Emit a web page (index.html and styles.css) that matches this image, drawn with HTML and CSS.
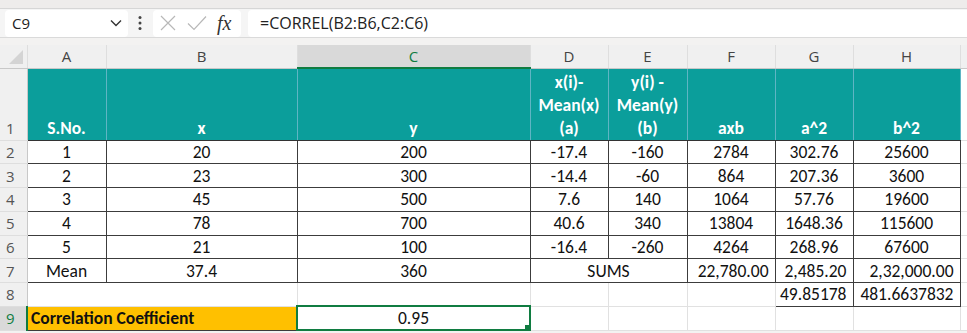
FILE: index.html
```html
<!DOCTYPE html>
<html>
	<head>
		<meta http-equiv="content-type" content="text/html; charset=utf-8" />
		<link rel="stylesheet" href="styles.css">
	</head>
	<body>
		<div class="top-edge"></div>
		<div class="formula-bar">
			<div class="name-box">
				<span>C9</span>
				<svg class="chevron" viewBox="0 0 12 8" width="12" height="8"><path d="M1 1.5 L6 6.5 L11 1.5" fill="none" stroke="#333" stroke-width="1.4" /></svg>
			</div>
			<svg class="dots" viewBox="0 0 4 16" width="4" height="16"><circle cx="2" cy="2.5" r="1.5" fill="#444" /><circle cx="2" cy="8" r="1.5" fill="#444" /><circle cx="2" cy="13.5" r="1.5" fill="#444" /></svg>
			<div class="fx-box">
				<svg viewBox="0 0 16 16" width="16" height="16"><path d="M1 1 L15 15 M15 1 L1 15" stroke="#b8b8b8" stroke-width="1.2" /></svg>
				<svg viewBox="0 0 20 16" width="20" height="16"><path d="M1 8.5 L7 14.5 L19 1.5" fill="none" stroke="#b8b8b8" stroke-width="1.2" /></svg>
				<span class="fx">fx</span>
			</div>
			<div class="formula-input">=CORREL(B2:B6,C2:C6)</div>
		</div>
		<div class="gap"></div>

		<table class="sheet">
			<colgroup>
				<col style="width:27px"><col style="width:79px"><col style="width:191px"><col style="width:233px">
				<col style="width:78px"><col style="width:79px"><col style="width:88px"><col style="width:78px">
				<col style="width:107px"><col style="width:7px">
			</colgroup>
			<tr class="col-heads">
				<th class="corner"><span class="tri"></span></th>
				<th>A</th><th>B</th><th class="sel-col">C</th><th>D</th><th>E</th><th>F</th><th>G</th><th>H</th><th></th>
			</tr>
			<tr class="head-row">
				<th class="rh">1</th>
				<td>S.No.</td><td>x</td><td>y</td>
				<td>x(i)-<br>Mean(x)<br>(a)</td>
				<td>y(i) -<br>Mean(y)<br>(b)</td>
				<td>axb</td><td>a^2</td><td>b^2</td>
				<td class="blank"></td>
			</tr>
			<tr class="data">
				<th class="rh">2</th><td>1</td><td>20</td><td>200</td><td>-17.4</td><td>-160</td><td>2784</td><td>302.76</td><td>25600</td><td class="blank"></td>
			</tr>
			<tr class="data">
				<th class="rh">3</th><td>2</td><td>23</td><td>300</td><td>-14.4</td><td>-60</td><td>864</td><td>207.36</td><td>3600</td><td class="blank"></td>
			</tr>
			<tr class="data">
				<th class="rh">4</th><td>3</td><td>45</td><td>500</td><td>7.6</td><td>140</td><td>1064</td><td>57.76</td><td>19600</td><td class="blank"></td>
			</tr>
			<tr class="data">
				<th class="rh">5</th><td>4</td><td>78</td><td>700</td><td>40.6</td><td>340</td><td>13804</td><td>1648.36</td><td>115600</td><td class="blank"></td>
			</tr>
			<tr class="data">
				<th class="rh">6</th><td>5</td><td>21</td><td>100</td><td>-16.4</td><td>-260</td><td>4264</td><td>268.96</td><td>67600</td><td class="blank"></td>
			</tr>
			<tr class="data">
				<th class="rh">7</th><td>Mean</td><td>37.4</td><td>360</td><td colspan="2">SUMS</td>
				<td class="num">22,780.00</td><td class="num">2,485.20</td><td class="num">2,32,000.00</td><td class="blank"></td>
			</tr>
			<tr class="data">
				<th class="rh">8</th><td class="blank" colspan="2"></td><td class="blank"></td><td class="blank"></td><td class="blank"></td><td class="blank"></td>
				<td class="num">49.85178</td><td class="num">481.6637832</td><td class="blank"></td>
			</tr>
			<tr class="data last">
				<th class="rh sel-row">9</th>
				<td class="label" colspan="2">Correlation Coefficient</td>
				<td class="active">0.95<span class="handle"></span></td>
				<td class="blank"></td><td class="blank"></td><td class="blank"></td><td class="blank"></td><td class="blank"></td><td class="blank"></td>
			</tr>
		</table>
	</body>
</html>
```

FILE: styles.css
```css
html, body {
	margin: 0;
	padding: 0;
	background: #f3f2f1;
	overflow: hidden;
}

.top-edge {
	height: 8px;
	background: #eeeceb;
	border-bottom: 1px solid #d6d6d6;
}

.formula-bar {
	display: flex;
	align-items: center;
	height: 28px;
	background: #f5f5f5;
	font-family: "Open Sans", "Noto Sans", sans-serif;
	font-size: 15px;
	color: #222;
	border-bottom: 1px solid #dadada;
}

.name-box {
	display: flex;
	align-items: center;
	justify-content: space-between;
	box-sizing: border-box;
	width: 123px;
	height: 27px;
	margin-left: 5px;
	padding: 0 6px 0 7px;
	background: #fff;
	border-radius: 4px;
}

.dots {
	margin: 0 11px 0 10px;
}

.fx-box {
	display: flex;
	align-items: center;
	gap: 11px;
	box-sizing: border-box;
	width: 88px;
	height: 27px;
	padding: 0 6px 0 7px;
	background: #fff;
	border-radius: 4px;
}

.fx {
	font-family: "Liberation Serif", serif;
	font-style: italic;
	font-size: 20px;
	color: #333;
	margin-left: -1px;
}

.formula-input {
	flex: 1;
	height: 27px;
	line-height: 27px;
	margin-left: 7px;
	padding-left: 12px;
	background: #fff;
	border-radius: 4px 0 0 4px;
	font-size: 16px;
}

.gap {
	height: 7px;
	background: #f3f2f1;
}

.sheet {
	table-layout: fixed;
	border-collapse: collapse;
	width: 967px;
	background: #fff;
	font-family: Carlito, Lato, "Liberation Sans", sans-serif;
	font-size: 17.5px;
	color: #111;
}

.sheet th, .sheet td {
	padding: 0;
	overflow: hidden;
	white-space: nowrap;
}

.col-heads th {
	height: 22px;
	background: #f0f0f0;
	border-right: 1px solid #dedede;
	border-bottom: 1px solid #c8c8c8;
	font-family: "Open Sans", "Noto Sans", sans-serif;
	font-weight: normal;
	font-size: 15px;
	color: #444;
}

.col-heads .sel-col {
	background: #d9d9d9;
	color: #107c41;
	border-bottom: 2px solid #107c41;
}

.corner {
	position: relative;
}

.tri {
	position: absolute;
	right: 4px;
	bottom: 4px;
	width: 0;
	height: 0;
	border-left: 14px solid transparent;
	border-bottom: 14px solid #d4d4d4;
}

.rh {
	background: #f0f0f0;
	border-bottom: 1px solid #dedede;
	border-right: 1px solid #c8c8c8;
	font-family: "Open Sans", "Noto Sans", sans-serif;
	font-weight: normal;
	font-size: 15px;
	color: #555;
	vertical-align: middle;
	text-align: left;
	padding-left: 6px !important;
}

.head-row {
	height: 72px;
}

.head-row .rh {
	vertical-align: bottom;
	padding-bottom: 2px !important;
}

.head-row td {
	background: #0b9e9b;
	color: #fff;
	font-weight: bold;
	text-align: center;
	vertical-align: bottom;
	line-height: 23px;
	border-right: 1px solid #5fb5c4;
	border-bottom: 1px solid #333;
}

.head-row td.blank {
	background: #fff;
	border-right: none;
	border-bottom: 1px solid #e1e1e1;
}

.data {
	height: 23.75px;
}

.data td {
	text-align: center;
	border: 1px solid #3c3c3c;
}

.data td.num {
	text-align: right;
	padding-right: 6px;
}

.data td.blank {
	border: none;
	border-right: 1px solid #e1e1e1;
	border-bottom: 1px solid #e1e1e1;
}

.data td.label {
	background: #ffc000;
	text-align: left;
	font-weight: bold;
	padding-left: 3px;
	border: 1px solid #3c3c3c;
}

.data td.active {
	position: relative;
	border: 2px solid #107c41;
}

.handle {
	position: absolute;
	right: -3px;
	bottom: -3px;
	width: 6px;
	height: 6px;
	background: #107c41;
	border: 1px solid #fff;
}

.rh.sel-row {
	background: #d9d9d9;
	color: #107c41;
	border-right: 2px solid #107c41;
}
```
